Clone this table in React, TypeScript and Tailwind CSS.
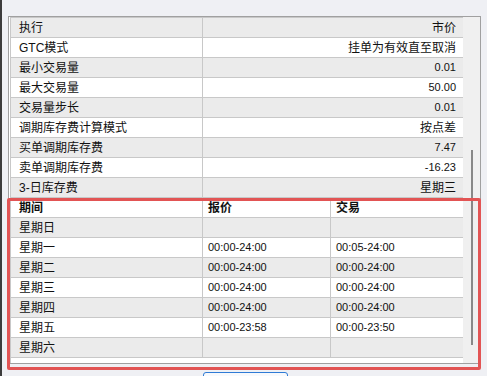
import React from 'react'

const props: [string, string][] = [
  ['执行', '市价'],
  ['GTC模式', '挂单为有效直至取消'],
  ['最小交易量', '0.01'],
  ['最大交易量', '50.00'],
  ['交易量步长', '0.01'],
  ['调期库存费计算模式', '按点差'],
  ['买单调期库存费', '7.47'],
  ['卖单调期库存费', '-16.23'],
  ['3-日库存费', '星期三'],
]

const sessions: [string, string, string][] = [
  ['星期日', '', ''],
  ['星期一', '00:00-24:00', '00:05-24:00'],
  ['星期二', '00:00-24:00', '00:00-24:00'],
  ['星期三', '00:00-24:00', '00:00-24:00'],
  ['星期四', '00:00-24:00', '00:00-24:00'],
  ['星期五', '00:00-23:58', '00:00-23:50'],
  ['星期六', '', ''],
]

// 纯数字的值用小一号字
const isNum = (s: string) => /^[\d.:\-]+$/.test(s)

export default function App() {
  return (
    <div
      className="relative w-[487px] h-[376px] overflow-hidden bg-[#eff0f4] border-l-2 border-[#3c3c3c] text-[12px] text-[#111]"
      style={{ fontFamily: '"Liberation Sans", "Noto Sans CJK SC", sans-serif' }}
    >
      <div className="ml-[6px] mt-[16px] w-[473px] h-[348px] border border-[#a0a0a0] bg-white flex pl-px">
        <div className="w-[453px] border-l border-[#c8c8c8]">
          {/* 属性列表 */}
          <div className="border-t border-[#c8c8c8]">
            {props.map(([k, v], i) => (
              <div
                key={k}
                className={`flex h-[20px] border-b border-[#c8c8c8] ${i % 2 === 0 ? 'bg-[#ebebeb]' : 'bg-white'}`}
              >
                <div className="w-[192px] border-r border-[#c8c8c8] pl-[8px] flex items-center">{k}</div>
                <div className={`flex-1 pr-[7px] flex items-center justify-end ${isNum(v) ? 'text-[11px]' : ''}`}>{v}</div>
              </div>
            ))}
          </div>

          {/* 交易时段 */}
          <div>
            <div className="grid grid-cols-[192px_128px_1fr] h-[20px] border-b border-[#c8c8c8] bg-white font-bold">
              <div className="border-r border-[#c8c8c8] pl-[8px] flex items-center">期间</div>
              <div className="border-r border-[#c8c8c8] pl-[5px] flex items-center">报价</div>
              <div className="pl-[5px] flex items-center">交易</div>
            </div>
            {sessions.map(([d, q, t], i) => (
              <div
                key={d}
                className={`grid grid-cols-[192px_128px_1fr] h-[20px] border-b border-[#c8c8c8] ${i % 2 === 0 ? 'bg-[#ebebeb]' : 'bg-white'}`}
              >
                <div className="border-r border-[#c8c8c8] pl-[8px] flex items-center">{d}</div>
                <div className="border-r border-[#c8c8c8] pl-[5px] flex items-center text-[11px]">{q}</div>
                <div className="pl-[5px] flex items-center text-[11px]">{t}</div>
              </div>
            ))}
          </div>
        </div>

        {/* 滚动条 */}
        <div className="w-[17px] bg-[#f0f0f0] flex justify-center pt-[133px]">
          <div className="w-[2px] h-[195px] bg-[#888888] ml-px" />
        </div>
      </div>

      {/* 红色标注框 */}
      <div className="absolute left-[5px] top-[198px] w-[474px] h-[172px] border-[3px] border-[#e25454] rounded-[2px]" />

      {/* 底部按钮 */}
      <div className="absolute left-[201px] top-[372px] w-[85px] h-[8px] border border-[#2f7bd6] rounded-[3px] bg-[#f7f9fc]" />
    </div>
  )
}
